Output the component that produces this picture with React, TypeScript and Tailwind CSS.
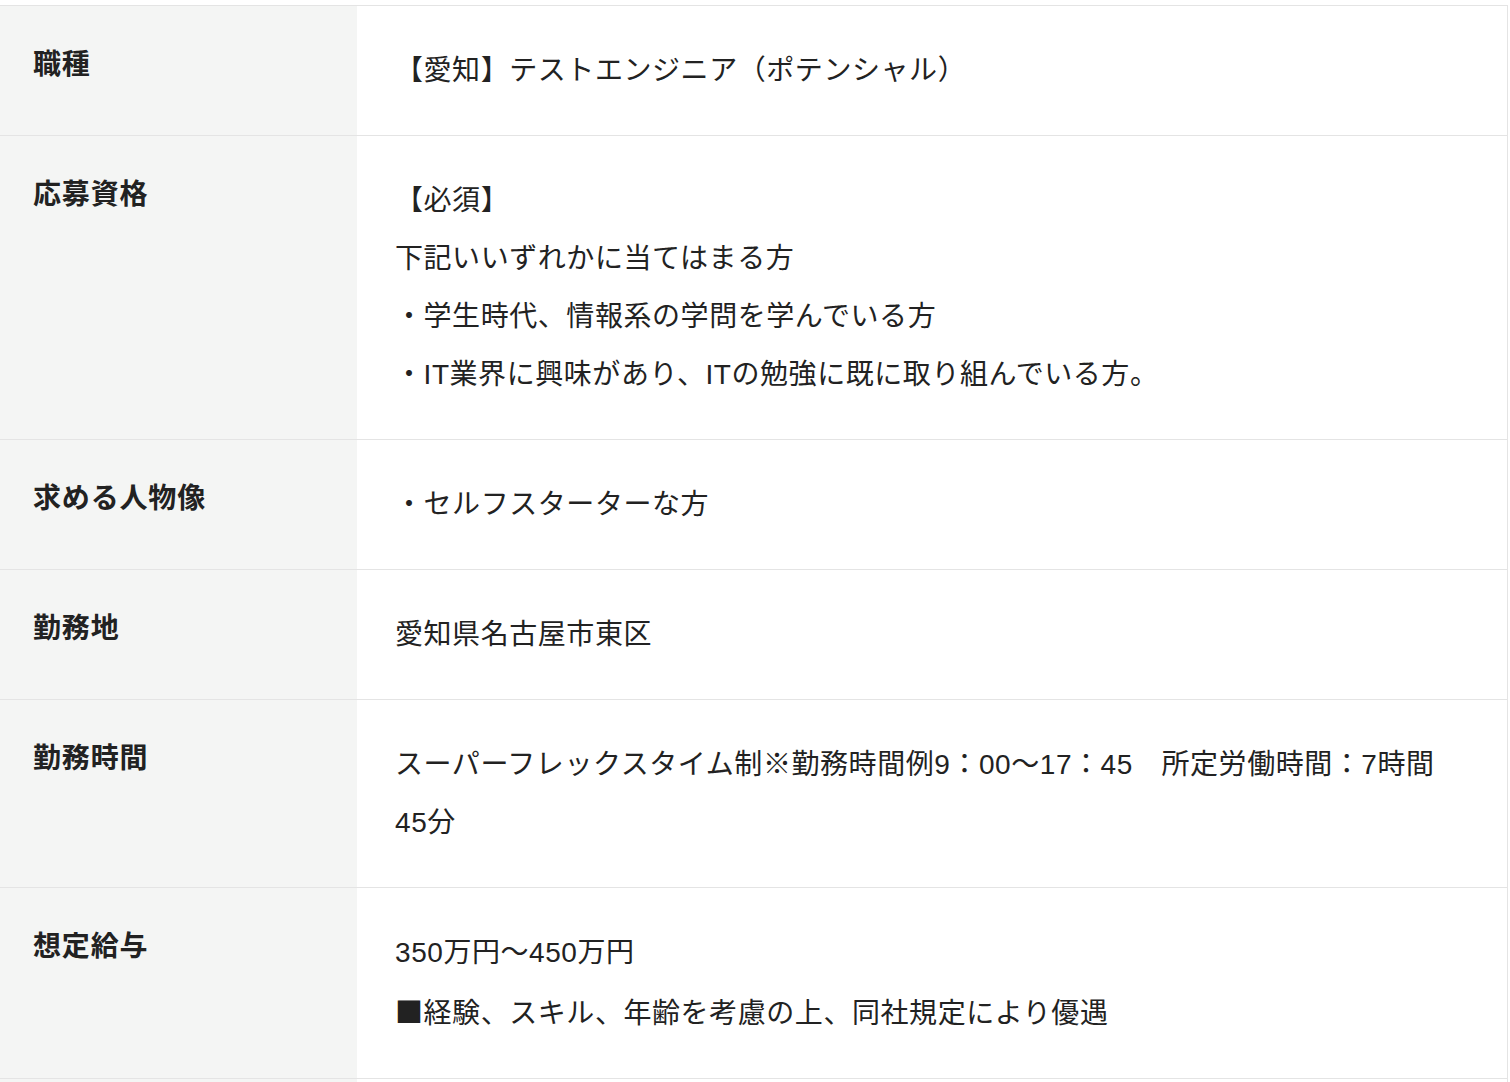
import React from 'react';

interface Row {
  label: string;
  lines: React.ReactNode[];
}

const cjk = '"Noto Sans CJK JP", sans-serif';

const rows: Row[] = [
  { label: '職種', lines: ['【愛知】テストエンジニア（ポテンシャル）'] },
  {
    label: '応募資格',
    lines: [
      '【必須】',
      '下記いいずれかに当てはまる方',
      '・学生時代、情報系の学問を学んでいる方',
      '・IT業界に興味があり、ITの勉強に既に取り組んでいる方。',
    ],
  },
  { label: '求める人物像', lines: ['・セルフスターターな方'] },
  { label: '勤務地', lines: ['愛知県名古屋市東区'] },
  {
    label: '勤務時間',
    lines: ['スーパーフレックスタイム制※勤務時間例9：00〜17：45　所定労働時間：7時間', '45分'],
  },
  {
    label: '想定給与',
    lines: [
      '350万円〜450万円',
      <>
        <span style={{ fontFamily: cjk }}>■</span>経験、スキル、年齢を考慮の上、同社規定により優遇
      </>,
    ],
  },
  { label: '', lines: [''] },
];

const App: React.FC = () => {
  return (
    <div
      className="h-[1082px] w-[1510px] overflow-hidden bg-white text-[#222]"
      style={{ fontFamily: '"Liberation Sans", "Noto Sans CJK JP", sans-serif' }}
    >
      <div className="mt-[5px] w-[1508px] border-t border-r border-[#e4e4e4]">
        {rows.map((row, i) => (
          <div key={i} className="grid grid-cols-[357px_1fr] border-b border-[#e4e4e4]">
            {/* 見出し */}
            <div className="bg-[#f4f5f4] pl-[33px] pt-[36px] pb-[35px] text-[28px] font-bold leading-[46px] tracking-[0.03em]">
              {row.label}
            </div>
            {/* 内容 */}
            <div className="pl-[38px] pr-[38px] pt-[36px] pb-[35px] text-[28px] leading-[58px] tracking-[0.02em]">
              {row.lines.map((line, j) => (
                <p key={j} className="whitespace-nowrap">{line || '\u00a0'}</p>
              ))}
            </div>
          </div>
        ))}
      </div>
    </div>
  );
};

export default App;
